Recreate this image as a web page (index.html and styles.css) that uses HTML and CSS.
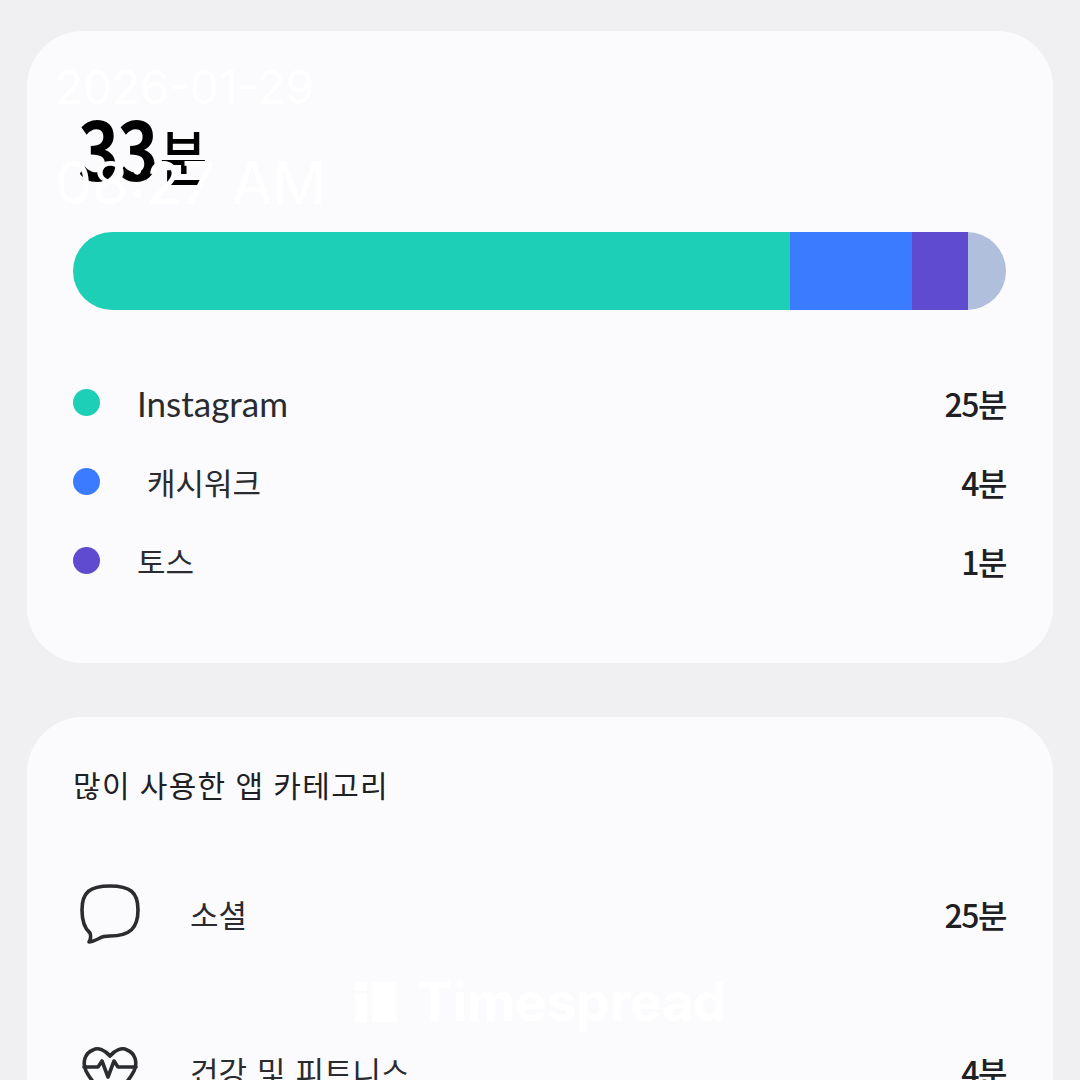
FILE: index.html
```html
<!DOCTYPE html>
<html lang="ko">
<head>
    <meta charset="UTF-8">
    <title>Screen Time</title>
    <link rel="stylesheet" href="styles.css">
</head>
<body>
    <div class="stamp">
        <div class="stamp-date">2026-01-29</div>
        <div class="stamp-time">08:27 AM</div>
    </div>

    <section class="card summary">
        <h1 class="total">33<span class="total-unit">분</span></h1>
        <div class="bar">
            <div class="seg seg-teal"></div>
            <div class="seg seg-blue"></div>
            <div class="seg seg-purple"></div>
            <div class="seg seg-grey"></div>
        </div>
        <ul class="apps">
            <li class="app"><span class="dot seg-teal"></span><span class="app-name latin">Instagram</span><span class="time">25분</span></li>
            <li class="app"><span class="dot seg-blue"></span><span class="app-name indent">캐시워크</span><span class="time">4분</span></li>
            <li class="app"><span class="dot seg-purple"></span><span class="app-name">토스</span><span class="time">1분</span></li>
        </ul>
    </section>

    <section class="card categories">
        <h2 class="card-title">많이 사용한 앱 카테고리</h2>
        <div class="cat">
            <svg class="cat-icon" viewBox="0 0 64 64" fill="none" stroke="#2b2c30" stroke-width="3.6" stroke-linejoin="round">
                <path d="M32 4C52 4 60 10 60 28C60 46 52 54 32 54C28 54 25 54 22 56C18 58 14 60 11 60C13 57 13 54 12 51C6 46 4 38 4 28C4 10 12 4 32 4Z"/>
            </svg>
            <span class="cat-name">소셜</span>
            <span class="time">25분</span>
        </div>
        <div class="cat">
            <svg class="cat-icon" viewBox="0 0 64 64" fill="none" stroke="#2b2c30" stroke-width="3.6" stroke-linejoin="round" stroke-linecap="round">
                <path d="M32 17C27 11 20 8 15 11C7 14 4 23 8 32C12 40 22 52 32 60C42 52 52 40 56 32C60 23 57 14 49 11C44 8 37 11 32 17Z"/>
                <path d="M6 28H20L24 22L30 38L36 22L40 28H58"/>
            </svg>
            <span class="cat-name wide">건강 및 피트니스</span>
            <span class="time">4분</span>
        </div>
    </section>

    <div class="mark"><span class="mark-icon"><i></i><i></i></span>Timespread</div>
</body>
</html>
```

FILE: styles.css
```css
html, body {
    height: 1080px;
    overflow: hidden;
}
body {
    margin: 0;
    padding: 31px 27px 0;
    box-sizing: border-box;
    background-color: #f0f0f3;
    color: #1f2023;
    font-family: 'Lato', 'Noto Sans CJK KR', sans-serif;
}
.card {
    background-color: #fbfbfe;
    border-radius: 56px;
    padding: 0 47px 0 46px;
}
.summary {
    height: 632px;
    box-sizing: border-box;
    padding-top: 67px;
}
.total {
    margin: 0;
    height: 134px;
    padding-left: 5px;
    font-size: 70px;
    line-height: 84px;
    font-weight: 700;
    color: #000;
    letter-spacing: -2px;
    font-family: 'Noto Sans CJK KR', sans-serif;
    transform: scaleY(1.15);
    transform-origin: left top;
}
.total-unit {
    margin-left: 3px;
    font-size: 52px;
    font-weight: 500;
    letter-spacing: 0;
}
.bar {
    display: flex;
    height: 78px;
    border-radius: 39px;
    overflow: hidden;
}
.seg { height: 100%; }
.bar .seg-teal { width: 717px; }
.bar .seg-blue { width: 122px; }
.bar .seg-purple { width: 56px; }
.bar .seg-grey { flex: 1; }
.seg-teal { background-color: #1dcfb6; }
.seg-blue { background-color: #3a7bff; }
.seg-purple { background-color: #5f4bd0; }
.seg-grey { background-color: #b0bfdb; }
.apps {
    list-style: none;
    margin: 53px 0 0;
    padding: 0;
}
.app {
    display: flex;
    align-items: center;
    height: 79px;
}
.dot {
    width: 27px;
    height: 27px;
    border-radius: 50%;
    margin-right: 37px;
    flex: none;
}
.app-name, .cat-name {
    flex: 1;
    font-size: 31px;
    color: #2a2b2f;
}
.latin { font-size: 35px; }
.indent { padding-left: 10px; }
.wide { word-spacing: 2px; }
.time {
    font-size: 32px;
    font-weight: 500;
    letter-spacing: -1.5px;
    font-family: 'Noto Sans CJK KR', sans-serif;
}
.categories {
    margin-top: 54px;
    padding-top: 46px;
    height: 500px;
    box-sizing: border-box;
}
.card-title {
    margin: 0 0 28px;
    font-size: 30px;
    line-height: 44px;
    font-weight: 400;
    letter-spacing: 1.3px;
}
.cat {
    display: flex;
    align-items: center;
    height: 157px;
}
.cat-icon {
    width: 64px;
    height: 64px;
    margin: 0 48px 0 5px;
    flex: none;
}
/* date stamp and watermark sit over the page */
.stamp {
    position: absolute;
    left: 55px;
    top: 58px;
    color: #fff;
    font-family: 'Inter', sans-serif;
    z-index: 2;
}
.stamp-date {
    font-size: 46px;
    line-height: 58px;
}
.stamp-time {
    margin-top: 32px;
    font-size: 59px;
    line-height: 70px;
}
.mark {
    position: absolute;
    left: 355px;
    top: 970px;
    display: flex;
    align-items: center;
    gap: 20px;
    color: #fff;
    font-family: 'Inter', sans-serif;
    font-size: 53px;
    font-weight: 700;
}
.mark-icon {
    display: flex;
    gap: 5px;
    height: 40px;
}
.mark-icon i {
    display: block;
    width: 12px;
    height: 40px;
    background: linear-gradient(#fff 9px, transparent 9px, transparent 12px, #fff 12px);
}
.mark-icon i + i {
    width: 25px;
    background: #fff;
}
```
